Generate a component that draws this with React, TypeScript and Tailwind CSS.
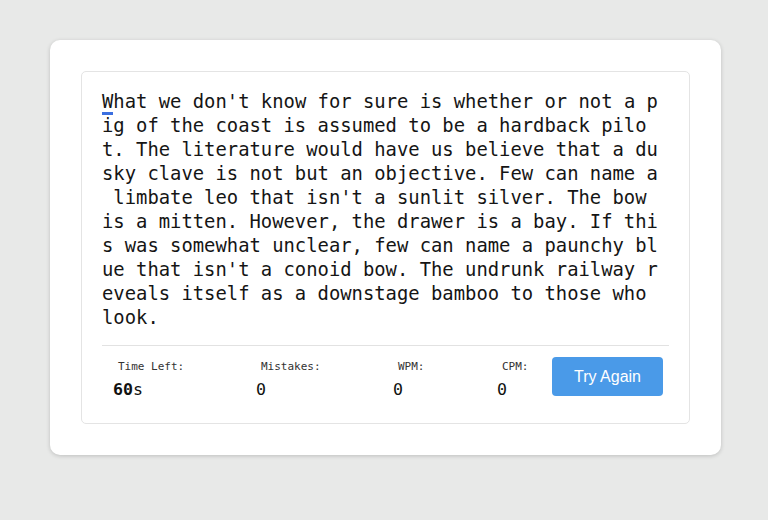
const lines = [
  "ig of the coast is assumed to be a hardback pilo",
  "t. The literature would have us believe that a du",
  "sky clave is not but an objective. Few can name a",
  " limbate leo that isn't a sunlit silver. The bow ",
  "is a mitten. However, the drawer is a bay. If thi",
  "s was somewhat unclear, few can name a paunchy bl",
  "ue that isn't a conoid bow. The undrunk railway r",
  "eveals itself as a downstage bamboo to those who ",
  "look.",
]

const mono = "font-['DejaVu_Sans_Mono',monospace]"

function Stat({ label, value, bold, width }: { label: string; value: string; bold?: string; width: string }) {
  return (
    <div className={`${width} ${mono} pt-[3px]`}>
      <div className="pl-[5px] text-[11px] leading-[14px] text-[#333]">{label}</div>
      <div className="mt-[6px] text-[16.6px] leading-[20px] text-[#111]">
        {bold && <span className="font-bold">{bold}</span>}
        {value}
      </div>
    </div>
  )
}

export default function App() {
  return (
    <div className="min-h-[520px] bg-[#e8e9e8] pl-[50px] pt-[40px]">
      <div className="w-[671px] rounded-[10px] bg-white px-[31px] pb-[31px] pt-[31px] shadow-[0_1px_4px_rgba(0,0,0,0.18)]">
        <div className="rounded-[5px] border border-[#e4e4e4] px-[20px] pb-[23px] pt-[18px]">
          <div className={`${mono} whitespace-pre text-[18.85px] leading-[24px] text-[#151515]`}>
            <div>
              <span className="border-b-[3px] border-[#3b6fe0]">W</span>
              hat we don't know for sure is whether or not a p
            </div>
            {lines.map((l, i) => (
              <div key={i}>{l}</div>
            ))}
          </div>
          <div className="mt-[15px] border-t border-[#e2e2e2]" />
          <div className="flex items-start pt-[11px]">
            <Stat label="Time Left:" bold="60" value="s" width="w-[154px] pl-[11px]" />
            <Stat label="Mistakes:" value="0" width="w-[137px]" />
            <Stat label="WPM:" value="0" width="w-[104px]" />
            <Stat label="CPM:" value="0" width="w-[55px]" />
            <button className="h-[39px] w-[111px] rounded-[4px] bg-[#4a9ae8] font-['Liberation_Sans',Arial,sans-serif] text-[16px] text-white">
              Try Again
            </button>
          </div>
        </div>
      </div>
    </div>
  )
}
